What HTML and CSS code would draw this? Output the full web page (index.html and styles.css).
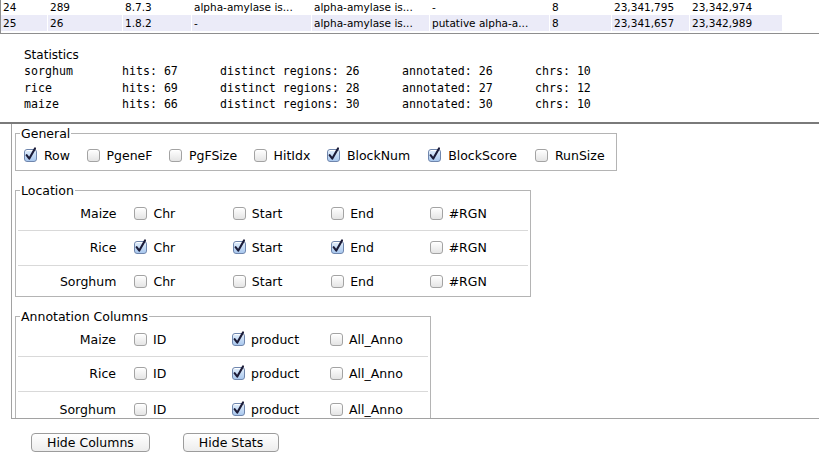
FILE: index.html
```html
<!DOCTYPE html>
<html>
<head>
<meta charset="utf-8">
<title>Columns</title>
<link rel="stylesheet" href="styles.css">
</head>
<body>
<div class="results">
  <div class="trow">
    <span class="c w1">24</span><span class="c w2">289</span><span class="c w3">8.7.3</span><span class="c w4">alpha-amylase is...</span><span class="c w5">alpha-amylase is...</span><span class="c w6">-</span><span class="c w7">8</span><span class="c w8">23,341,795</span><span class="c w9">23,342,974</span>
  </div>
  <div class="trow sel">
    <span class="c w1">25</span><span class="c w2">26</span><span class="c w3">1.8.2</span><span class="c w4">-</span><span class="c w5">alpha-amylase is...</span><span class="c w6">putative alpha-a...</span><span class="c w7">8</span><span class="c w8">23,341,657</span><span class="c w9">23,342,989</span>
  </div>
</div>

<section class="stats">
  <div class="stats-title">Statistics</div>
  <div class="stats-grid">
    <span>sorghum</span><span>hits: 67</span><span>distinct regions: 26</span><span>annotated: 26</span><span>chrs: 10</span>
    <span>rice</span><span>hits: 69</span><span>distinct regions: 28</span><span>annotated: 27</span><span>chrs: 12</span>
    <span>maize</span><span>hits: 66</span><span>distinct regions: 30</span><span>annotated: 30</span><span>chrs: 10</span>
  </div>
</section>

<div class="panel">
  <fieldset class="box general">
    <legend>General</legend>
    <div class="flow">
      <label class="opt"><span class="cb on"><svg viewBox="0 0 11 11"><path d="M1.6 5.2 L4.3 8.6 L10 -1.6"/></svg></span>Row</label>
      <label class="opt"><span class="cb"></span>PgeneF</label>
      <label class="opt"><span class="cb"></span>PgFSize</label>
      <label class="opt"><span class="cb"></span>HitIdx</label>
      <label class="opt"><span class="cb on"><svg viewBox="0 0 11 11"><path d="M1.6 5.2 L4.3 8.6 L10 -1.6"/></svg></span>BlockNum</label>
      <label class="opt"><span class="cb on"><svg viewBox="0 0 11 11"><path d="M1.6 5.2 L4.3 8.6 L10 -1.6"/></svg></span>BlockScore</label>
      <label class="opt"><span class="cb"></span>RunSize</label>
    </div>
  </fieldset>

  <fieldset class="box location">
    <legend>Location</legend>
    <div class="grow">
      <span class="rlabel">Maize</span>
      <label class="opt col"><span class="cb"></span>Chr</label>
      <label class="opt col"><span class="cb"></span>Start</label>
      <label class="opt col"><span class="cb"></span>End</label>
      <label class="opt col"><span class="cb"></span>#RGN</label>
    </div>
    <div class="grow">
      <span class="rlabel">Rice</span>
      <label class="opt col"><span class="cb on"><svg viewBox="0 0 11 11"><path d="M1.6 5.2 L4.3 8.6 L10 -1.6"/></svg></span>Chr</label>
      <label class="opt col"><span class="cb on"><svg viewBox="0 0 11 11"><path d="M1.6 5.2 L4.3 8.6 L10 -1.6"/></svg></span>Start</label>
      <label class="opt col"><span class="cb on"><svg viewBox="0 0 11 11"><path d="M1.6 5.2 L4.3 8.6 L10 -1.6"/></svg></span>End</label>
      <label class="opt col"><span class="cb"></span>#RGN</label>
    </div>
    <div class="grow">
      <span class="rlabel">Sorghum</span>
      <label class="opt col"><span class="cb"></span>Chr</label>
      <label class="opt col"><span class="cb"></span>Start</label>
      <label class="opt col"><span class="cb"></span>End</label>
      <label class="opt col"><span class="cb"></span>#RGN</label>
    </div>
  </fieldset>

  <fieldset class="box annot">
    <legend>Annotation Columns</legend>
    <div class="grow">
      <span class="rlabel">Maize</span>
      <label class="opt col"><span class="cb"></span>ID</label>
      <label class="opt col"><span class="cb on"><svg viewBox="0 0 11 11"><path d="M1.6 5.2 L4.3 8.6 L10 -1.6"/></svg></span>product</label>
      <label class="opt col"><span class="cb"></span>All_Anno</label>
    </div>
    <div class="grow">
      <span class="rlabel">Rice</span>
      <label class="opt col"><span class="cb"></span>ID</label>
      <label class="opt col"><span class="cb on"><svg viewBox="0 0 11 11"><path d="M1.6 5.2 L4.3 8.6 L10 -1.6"/></svg></span>product</label>
      <label class="opt col"><span class="cb"></span>All_Anno</label>
    </div>
    <div class="grow">
      <span class="rlabel">Sorghum</span>
      <label class="opt col"><span class="cb"></span>ID</label>
      <label class="opt col"><span class="cb on"><svg viewBox="0 0 11 11"><path d="M1.6 5.2 L4.3 8.6 L10 -1.6"/></svg></span>product</label>
      <label class="opt col"><span class="cb"></span>All_Anno</label>
    </div>
  </fieldset>
</div>

<div class="buttons">
  <button class="btn">Hide Columns</button>
  <button class="btn">Hide Stats</button>
</div>
</body>
</html>
```

FILE: styles.css
```css
* { box-sizing: border-box; }
html, body { margin: 0; padding: 0; }
body {
  width: 819px;
  height: 468px;
  overflow: hidden;
  background: #fff;
  color: #000;
  font-family: "DejaVu Sans", "Liberation Sans", sans-serif;
  font-size: 12.5px;
}

/* results table */
.results {
  height: 34px;
  border-left: 1px solid #8e8e8e;
  border-bottom: 1px solid #8e8e8e;
  overflow: hidden;
  font-size: 10.5px;
}
.trow { display: flex; width: 781px; height: 16px; line-height: 16px; }
.trow:first-child { margin-top: -1px; }
.trow.sel { background: #ebebf8; }
.c { flex: none; padding-left: 2px; border-right: 1px solid #fff; white-space: nowrap; overflow: hidden; }
.w1 { width: 47px; }
.w2 { width: 75px; }
.w3 { width: 69px; }
.w4 { width: 120px; }
.w5 { width: 118px; }
.w6 { width: 120px; }
.w7 { width: 62px; }
.w8 { width: 78px; }
.w9 { width: 92px; border-right: 0; }

/* statistics */
.stats {
  padding: 13px 0 9px 24px;
  border-bottom: 2px solid #7a7a7a;
}
.stats-title { line-height: 16px; font-size: 12px; }
.stats-grid {
  display: grid;
  grid-template-columns: 98px 98px 182px 133px auto;
  font-family: "DejaVu Sans Mono", "Liberation Mono", monospace;
  font-size: 11.6px;
  line-height: 16.5px;
  white-space: pre;
}

/* column chooser panel */
.panel {
  margin-left: 11px;
  height: 295px;
  border-left: 1px solid #a2a2a2;
  border-bottom: 1px solid #a2a2a2;
  overflow: hidden;
  padding: 3px 0 0 3px;
}
.box {
  margin: 0;
  padding: 0;
  border: 1px solid #b4b4b4;
  min-width: 0;
}
.box legend {
  padding: 0 1px;
  margin-left: 4px;
  line-height: 14px;
}
.general { width: 602px; }
.location { width: 516px; margin-top: 13px; }
.annot { width: 416px; margin-top: 13px; }

.flow {
  display: flex;
  align-items: center;
  height: 29px;
  padding-left: 8px;
  gap: 16.5px;
}
.flow .opt:nth-child(n+6) { margin-left: 1.5px; }

.grow {
  display: flex;
  align-items: center;
  height: 35px;
  margin: 0 2px;
  border-bottom: 1px solid #d9d9d9;
}
.grow:first-of-type { height: 33px; }
.location .grow:last-of-type { height: 30px; padding-top: 2px; border-bottom: 0; }
.annot .grow:last-of-type { border-bottom: 0; }
.rlabel { width: 100px; text-align: right; margin-right: 18px; }

.opt { display: flex; align-items: center; white-space: nowrap; }
.opt.col { width: 100px; }
.flow .cb { margin-right: 7px; }

.cb {
  flex: none;
  width: 13px;
  height: 13px;
  margin-right: 6px;
  border: 1px solid #a3a3a3;
  border-radius: 3px;
  background: linear-gradient(#ffffff, #e4e4e4);
  box-shadow: inset 0 1px 0 #fff;
}
.cb.on {
  border-color: #6f86ad;
  background: linear-gradient(#e2eefb, #a9c8ee);
}
.cb svg {
  display: block;
  width: 11px;
  height: 11px;
  overflow: visible;
}
.cb svg path {
  fill: none;
  stroke: #1c1c38;
  stroke-width: 2.1;
  stroke-linecap: round;
  stroke-linejoin: round;
}

/* buttons */
.buttons {
  display: flex;
  gap: 33px;
  padding-left: 31px;
  margin-top: 14px;
}
.btn {
  height: 19px;
  padding: 0 15px;
  font-family: "DejaVu Sans", "Liberation Sans", sans-serif;
  font-size: 12.5px;
  color: #000;
  border: 1px solid #9c9c9c;
  border-radius: 4px;
  background: linear-gradient(#ffffff, #ededed);
  line-height: 17px;
}
```
